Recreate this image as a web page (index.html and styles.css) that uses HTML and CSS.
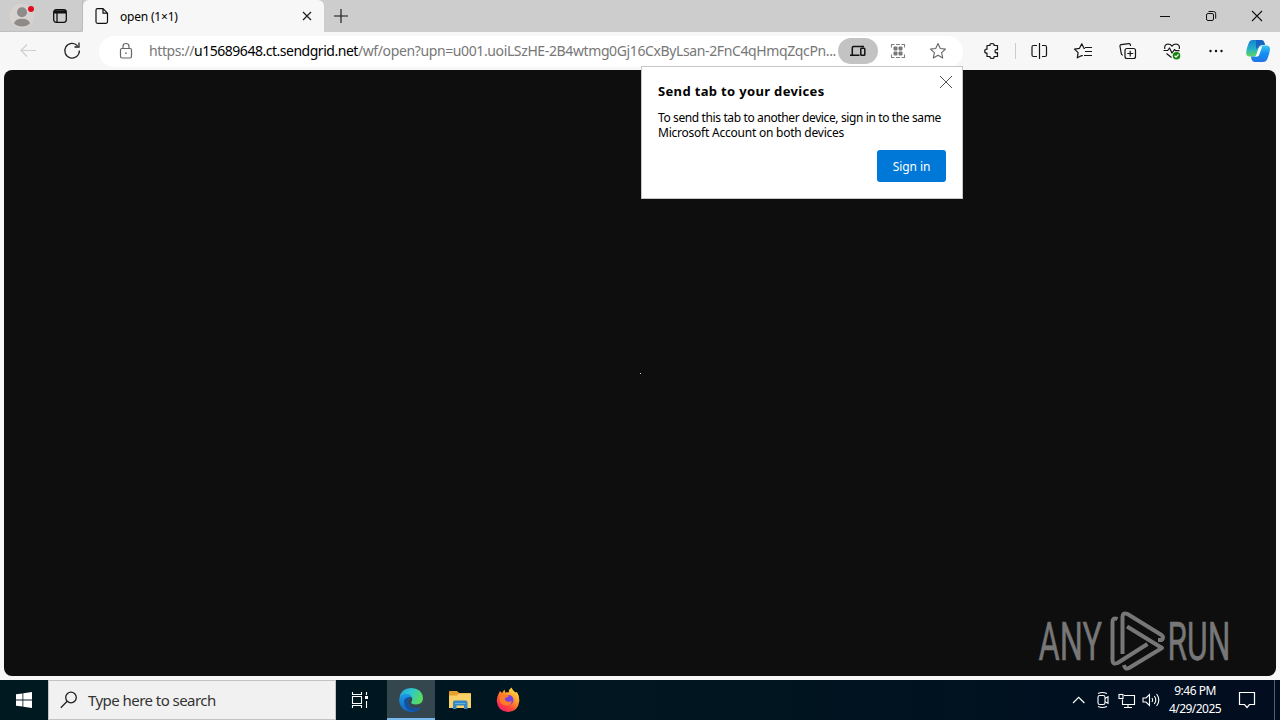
FILE: index.html
```html
<!DOCTYPE html>
<html lang="en">
<head>
<meta charset="utf-8">
<title>open (1×1)</title>
<link rel="stylesheet" href="styles.css">
</head>
<body>
<div class="desktop">
  <header class="tabstrip">
    <div class="strip-tools">
      <svg class="profile" width="28" height="28" viewBox="0 0 28 28"><circle cx="14" cy="14" r="12.5" fill="#d5d2d0"/><circle cx="14" cy="10.3" r="5" fill="#8e8b89"/><path d="M6 21.5q1-4.700 8-4.700t8 4.700q-3 3-8 3t-8-3z" fill="#8e8b89"/><circle cx="23" cy="7" r="3" fill="#e00b1c"/></svg>
      <svg class="workspaces" width="16" height="16" viewBox="0 0 16 16" fill="none" stroke="#111" stroke-width="1.300"><rect x="1.700" y="1.700" width="12.600" height="12.600" rx="2.500"/><path d="M2 3h12M2 4.600h12" stroke-width="1.700"/><path d="M5 5v9"/></svg>
    </div>
    <div class="tab">
      <svg width="14" height="16" viewBox="0 0 14 16" fill="none" stroke="#111" stroke-width="1.200"><path d="M2.500.7h5.500l4.500 4.500v8.600q0 1.500-1.500 1.500H2.500Q1 15.300 1 13.800V2.200Q1 .7 2.500.7zM8 .7v4.500h4.500"/></svg>
      <span class="tab-title">open (1×1)</span>
      <svg width="10" height="10" viewBox="0 0 10 10" stroke="#222" stroke-width="1.300"><path d="M1 1l8 8M9 1l-8 8"/></svg>
    </div>
    <svg class="newtab" width="14" height="14" viewBox="0 0 14 14" stroke="#111" stroke-width="1.100"><path d="M7 0v14M0 7h14"/></svg>
    <div class="window-buttons">
      <svg width="46" height="32" stroke="#111"><path d="M18 16.500h10"/></svg>
      <svg width="46" height="32" fill="none" stroke="#111"><rect x="18.500" y="13.500" width="7" height="7" rx="1.500"/><path d="M20.500 11.500h5q2.200 0 2.200 2.200v5"/></svg>
      <svg width="46" height="32" stroke="#111" stroke-width="1.100"><path d="M18 11l10 10M28 11L18 21"/></svg>
    </div>
  </header>

  <nav class="toolbar">
    <svg class="btn" viewBox="0 0 40 38" fill="none" stroke="#cfcfcf" stroke-width="1.200"><path d="M28 18.500H13M19 12.500l-6 6 6 6"/></svg>
    <svg class="btn refresh" viewBox="0 0 40 38" fill="none" stroke="#222" stroke-width="1.300"><path d="M25.500 13.800A7.300 7.300 0 1 0 27.400 18.500M27 10.500v4.500h-4.500"/></svg>
    <div class="omnibox">
      <svg class="lock" width="16" height="18" viewBox="0 0 16 18" fill="none" stroke="#666" stroke-width="1.200"><rect x="2.500" y="6.500" width="11" height="9.500" rx="1.500"/><path d="M5 6.500V4.500Q5 1.500 8 1.500t3 3v2"/><circle cx="8" cy="11.200" r=".7" fill="#666" stroke="none"/><path d="M7.500 11.200h1"/></svg>
      <div class="url"><span class="u1">https://</span><span class="host">u15689648.ct.sendgrid.net</span><span class="path">/wf/open?upn=u001.uoiLSzHE-2B4wtmg0Gj16CxByLsan-2FnC4qHmqZqcPn...</span></div>
      <svg class="pill" width="40" height="26" viewBox="0 0 40 26" fill="none" stroke="#111" stroke-width="1.500"><path d="M26 8.500H15.500Q14.300 8.500 14.300 9.700V17M12 17.200h9.500"/><rect x="22.800" y="10.300" width="4" height="7" rx=".8"/></svg>
      <svg class="btn" viewBox="0 0 40 38" fill="none" stroke="#808080" stroke-width="1.100"><path d="M13.500 15.500v-3h3M23.500 12.500h3v3M26.500 22.500v3h-3M16.500 25.500h-3v-3M18 12.500h4M18 25.500h4"/><g fill="#777" stroke="none"><rect x="15.500" y="14.500" width="4" height="4" rx="1"/><rect x="20.500" y="14.500" width="4" height="4" rx="1"/><rect x="15.500" y="19.500" width="4" height="4" rx="1"/><rect x="20.500" y="19.500" width="4" height="4" rx="1"/></g></svg>
      <svg class="btn" viewBox="0 0 40 38" fill="none" stroke="#666" stroke-width="1.100" stroke-linejoin="round"><path d="M20 11.500l2.300 5 5.200.6-3.900 3.600 1.100 5.300-4.700-2.700-4.700 2.700 1.100-5.300-3.900-3.600 5.200-.6z"/></svg>
    </div>
    <svg class="btn ext" viewBox="0 0 40 38" fill="none" stroke="#151515" stroke-width="1.200" stroke-linejoin="round"><path d="M16 13.500h3Q18.500 11.500 21 11.500t2 2H26.500v4.200q-2.500-.6-2.500 1.500t2.500 1.500V24.500h-3.500q.5 2-1.800 2t-2.200-2h-3v-3.300q-2.300 0-2.300-2t2.300-2z"/></svg>
    <div class="sep"></div>
    <svg class="btn" viewBox="0 0 40 38" fill="none" stroke="#151515" stroke-width="1.200"><path d="M18 13.500h-3.500q-1.500 0-1.500 1.500v8q0 1.500 1.500 1.500H18M23 13.500h3q1.500 0 1.500 1.500v8q0 1.500-1.500 1.500h-3M20.500 11v16"/></svg>
    <svg class="btn fav" viewBox="0 0 40 38" fill="none" stroke="#151515" stroke-width="1.200" stroke-linejoin="round"><path d="M21 16.500l-1-.2-2.200-4.500-2.300 4.500-5 .8 3.600 3.500-.8 5.200 4.500-2.300 1 .4M21 15.500h7M21 19.500h7M20 23.500h8"/></svg>
    <svg class="btn" viewBox="0 0 40 38" fill="none" stroke="#151515" stroke-width="1.200"><path d="M22.500 14v-1q-.3-1.500-1.800-1.300l-7.500 1q-1.500.2-1.200 1.800l1.300 7.200q.2 1.300 1.500 1.500"/><rect x="17" y="16.500" width="10.500" height="10" rx="2"/><path d="M22.200 18.700v5.800M19.300 21.500h5.900"/></svg>
    <svg class="btn" viewBox="0 0 40 38" fill="none" stroke="#151515" stroke-width="1.200" stroke-linejoin="round"><path d="M12.800 17q-.8-4.500 3.200-5 2.500 0 4 2.200 1.500-2.200 4-2.200 4.200.5 3.300 5M11.500 18.500h4.200l1.800-2.500 2.500 5 2.500-3.500 1 1.200h4M14.500 21.500l5 4"/><circle cx="24.500" cy="23.700" r="3.800" fill="#13850e" stroke="none"/><path d="M22.600 23.800l1.400 1.300 2.500-2.600" stroke="#fff"/></svg>
    <svg class="btn" viewBox="0 0 40 38" fill="#111"><circle cx="14.500" cy="19" r="1.200"/><circle cx="20" cy="19" r="1.200"/><circle cx="25.500" cy="19" r="1.200"/></svg>
    <svg class="btn copilot" viewBox="0 0 40 38">
      <defs><linearGradient id="ca" x1="0" y1="0" x2="0" y2="1"><stop offset="0" stop-color="#1682d4"/><stop offset=".55" stop-color="#25b2c8"/><stop offset="1" stop-color="#62d45e"/></linearGradient><linearGradient id="cb" x1="0" y1="0" x2="0" y2="1"><stop offset="0" stop-color="#38c7f4"/><stop offset=".5" stop-color="#128df0"/><stop offset="1" stop-color="#2475e8"/></linearGradient></defs>
      <path d="M14.500 8h9q2.200.2 2.800 2.500l.8 2.500h-3q-2.200 0-3 2.200l-2.500 7.500q-.8 1.700-2.500 1.700H11q-3.300-.5-2.800-4.400.6-4.300 2.500-9Q11.700 8 14.500 8z" fill="url(#ca)"/>
      <path d="M25.500 13.500h3.500q3.500.6 2.900 4.400-.6 4.300-2.400 8.600-1.200 3.500-4.500 3.500h-8.500q-2.200-.2-2.900-2.600l-.7-3h3.300q2.100 0 2.800-2.100l2.500-7q.8-1.800 4-1.800z" fill="url(#cb)"/><path d="M18 8h5.500q2.200.2 2.800 2.500l.8 2.500h-3q-2.200 0-3 2.200L18 17z" fill="#174fb5" opacity=".65"/><path d="M21.200 14.500h3l-3 8.500q-.7 1.800-2.700 1.800h-2l1.500-1.200z" fill="#fff"/>
    </svg>
  </nav>

  <main class="page"><div class="pixel"></div>
    <svg class="watermark" width="210" height="70" viewBox="0 0 210 70">
      <g fill="#777" stroke="#777" stroke-width=".5" font-family="Roboto, sans-serif" font-size="53"><text x="3.500" y="54" textLength="63.500" lengthAdjust="spacingAndGlyphs">ANY</text><text x="132.500" y="54" textLength="63" lengthAdjust="spacingAndGlyphs">RUN</text></g>
      <g fill="none" stroke="#777" stroke-width="4" stroke-linejoin="round"><path d="M82.500 13q-5-2-5 3v38q0 5 5 3l30-19"/><path d="M87.500 48V11q0-5 5-3l34 21q3 3 0 5h-3.500"/><path d="M92 20.500l35 21.500-33 20q-4 2-5-3"/></g>
    </svg>
  </main>

  <footer class="taskbar">
    <div class="start"><svg width="16" height="16" viewBox="0 0 16 16" fill="#fff"><path d="M0 2.300l6.500-.9v6.100H0zM7.300 1.200L16 0v7.500H7.300zM0 8.400h6.500v6.200L0 13.700zM7.300 8.400H16V16l-8.700-1.200z"/></svg></div>
    <div class="search"><svg width="18" height="18" viewBox="0 0 18 18" fill="none" stroke="#222" stroke-width="1.300"><circle cx="11" cy="6.500" r="5.300"/><path d="M7.200 10.300L.8 16.700"/></svg><span>Type here to search</span></div>
    <svg class="task" viewBox="0 0 48 40" fill="none" stroke="#fff" stroke-width="1.100"><path d="M16.500 12v2.500h9V12M16.500 28v-2.500h9V28M16.500 16.500h9v7h-9zM30.500 12v3M30.500 21v7"/><path d="M29 16h3v3h-3z" fill="#fff" stroke="none"/></svg>
    <svg class="task active" viewBox="0 0 48 40">
      <defs><linearGradient id="ea" x1="0" y1="0" x2="1" y2=".4"><stop offset="0" stop-color="#279fd8"/><stop offset=".5" stop-color="#2bc8d0"/><stop offset="1" stop-color="#58da62"/></linearGradient><linearGradient id="eb" x1="0" y1="0" x2="0" y2="1"><stop offset="0" stop-color="#1a9be5"/><stop offset="1" stop-color="#1264bd"/></linearGradient></defs>
      <path d="M12.500 18Q14 8 24 8q11 0 12 10 0 6-7 6.500-6 0-4.500-3 2-3-1-5.500-5-3-11 2z" fill="url(#ea)"/><path d="M12 20q1-6 7-6.300 5 .3 5.500 3.300-4 1-3.500 6 2 6 8 5.500 3-.3 5-1.500Q30 32.500 24 32 13 31 12 20z" fill="url(#eb)"/><path d="M17 22q0-5 7-5-4 2-3 6 2 6 8 5.500 3-.3 5-1.500-2.500 4-7 4.700-9-1-10-9.700z" fill="#1450a0"/>
      <rect y="38" width="48" height="2" fill="#76b9ed"/>
    </svg>
    <svg class="task" viewBox="0 0 48 40"><path d="M14 12q0-1 1-1h7l2 2h11q1 0 1 1v14H14z" fill="#e5a12d"/><path d="M14 15.500h8l2-2h12V28H14z" fill="#f8d268"/><path d="M18 29v-6.500q0-2 2-2h10.500q2 0 2 2V29h-3.500v-3.500h-7.500V29z" fill="#3588c5"/><path d="M20 23.500h10.500" stroke="#63b0dd"/></svg>
    <svg class="task firefox" viewBox="0 0 48 40">
      <defs><linearGradient id="fa" x1=".9" y1="0" x2=".2" y2="1"><stop offset="0" stop-color="#fff14f"/><stop offset=".4" stop-color="#ff9928"/><stop offset=".7" stop-color="#ff4939"/><stop offset="1" stop-color="#ef176d"/></linearGradient></defs>
      <path d="M14.500 14l1.500-3 2 2 2.500-3.500.8 3q1.700-.4 3.200 0Q25 9 27.500 7.500q1 3 4 5l1.500-.5q2.500 4 2.300 9Q34 32 24 32q-10-.5-11.200-10.500-.3-4 1.700-7.500z" fill="url(#fa)"/><circle cx="24.500" cy="20" r="5" fill="#7542e5"/><path d="M16 14q3-1.500 6 1l3 .5q-1 2.300-4 2.500-1 2 2 3.500 3 1 5-1-1 5-6 5-6-1-6.500-6z" fill="#ff7c27"/>
    </svg>
    <div class="tray">
      <svg width="24" height="40" fill="none" stroke="#fff" stroke-width="1.200"><path d="M6 23l5.700-5.700 5.700 5.700"/></svg>
      <svg width="24" height="40" fill="none" stroke="#fff" stroke-width="1.100"><rect x="7" y="15.500" width="7" height="9" rx="1.800"/><path d="M14 18.500l3-1.700v6.600l-3-1.700M7 13.500q4-2 9 0M7 26.500q4 2 9 0"/></svg>
      <svg width="24" height="40" fill="none" stroke="#fff" stroke-width="1.100"><path d="M9 15.500h10.500v9H7.500v-5M13 24.500v3M9 27.500h8"/><rect x="4" y="14.500" width="4" height="4"/></svg>
      <svg width="24" height="40" fill="none" stroke="#fff" stroke-width="1.100"><path d="M4 18h3l3.500-3.500v11L7 22H4zM13 18q1.500 2 0 4M15.300 16q3 4 0 8M17.600 14q4.500 6 0 12"/></svg>
      <div class="clock"><span>9:46 PM</span><span class="date">4/29/2025</span></div>
      <svg width="24" height="40" fill="none" stroke="#fff" stroke-width="1.200"><path d="M4.500 12.500h15v12h-5l-2.500 3-2.500-3h-5z"/></svg>
    </div>
    <div class="peek"></div>
  </footer>
</div>

<section class="popup">
  <svg class="close" width="12" height="12" viewBox="0 0 12 12" stroke="#555"><path d="M0 0l12 12M12 0L0 12"/></svg>
  <h1>Send tab to your devices</h1>
  <p><span class="line1">To send this tab to another device, sign in to the same</span><br><span class="line2">Microsoft Account on both devices</span></p>
  <button>Sign in</button>
</section>
</body>
</html>
```
FILE: styles.css
```css
* { box-sizing: border-box; }
body { margin: 0; width: 1280px; height: 720px; overflow: hidden; font-family: "Noto Sans", "Open Sans", sans-serif; color: #000; }
svg { display: block; flex: none; }
.desktop { height: 720px; display: flex; flex-direction: column; background: #f7f7f7; }
.tabstrip { height: 32px; display: flex; background: #cdcdcd; align-items: center; }
.strip-tools { width: 83px; height: 32px; display: flex; align-items: center; padding-left: 8px; gap: 16px; border-radius: 0 0 4px 0; border-right: 1px solid #bbb; border-bottom: 1px solid #c0c0c0; }
.tab { width: 241px; height: 32px; display: flex; align-items: center; padding: 0 12px; background: #f7f7f7; border-radius: 6px 6px 0 0; font-size: 12px; }
.tab-title { flex: 1; margin-left: 11px; letter-spacing: -0.2px; white-space: nowrap; }
.newtab { margin-left: 10px; }
.window-buttons { display: flex; margin-left: auto; }
.toolbar { height: 38px; display: flex; align-items: center; padding-left: 8px; background: #f7f7f7; }
.btn { width: 40px; height: 38px; }
.refresh { margin-left: 4px; }
.omnibox { width: 864px; height: 31px; margin-left: 7px; display: flex; align-items: center; background: #fff; border-radius: 16px; padding-left: 19px; }
.lock { margin-right: 15px; }
.url { width: 690px; font-size: 14px; line-height: 20px; white-space: nowrap; color: #777; }
.u1 { letter-spacing: -0.4px; }
.host { color: #000; letter-spacing: -0.48px; }
.path { letter-spacing: -0.38px; }
.pill { margin-left: -1px; background: #c3c3c3; border-radius: 13px; }
.ext { margin-left: 8px; }
.sep { width: 8px; height: 16px; border-left: 1px solid #ccc; margin-left: 4px; margin-right: -4px; }
.fav { margin-left: 5px; }
.fav ~ .btn { margin-left: 4px; }
.fav ~ .copilot { margin-left: 2px; }
.page { height: 606px; margin: 0 4px; border-radius: 8px; background: #0e0e0e; display: grid; place-items: center; grid-template: 606px / 1272px; }
.pixel { width: 1px; height: 1px; background: #ddd; grid-area: 1 / 1; }
.watermark { grid-area: 1 / 1; place-self: end; margin: 0 31px 0 0; }
.taskbar { height: 40px; margin-top: 4px; display: flex; background: linear-gradient(90deg, #001820, #001520 60%, #020d20); }
.start { width: 48px; display: flex; align-items: center; justify-content: center; }
.search { width: 288px; border: 1px solid #c2c2c2; background: #f1f1f1; display: flex; align-items: center; padding-left: 11px; color: #333; font-size: 15px; }
.search span { margin-left: 10px; letter-spacing: -0.55px; }
.task { width: 48px; height: 40px; }
.active { background: #34464e; margin-left: 3px; }
.firefox { margin-left: 1px; }
.tray { display: flex; margin-left: auto; color: #fff; }
.clock { width: 72px; height: 40px; padding: 2px 8px 0 0; display: flex; flex-direction: column; align-items: center; font-size: 12px; line-height: 18px; }
.clock span { letter-spacing: -0.5px; }
.clock .date { letter-spacing: -0.55px; }
.peek { width: 21px; border-right: 5px solid transparent; box-shadow: inset -1px 0 #536074; }
.popup { position: absolute; left: 641px; top: 66px; width: 322px; height: 133px; background: #fff; border: 1px solid #c6c6c6; padding: 15px 16px; display: flex; flex-direction: column; }
.close { position: absolute; right: 10px; top: 9px; }
.popup h1 { margin: 0; font-size: 13px; line-height: 18px; font-weight: 700; white-space: nowrap; letter-spacing: 0.34px; }
.popup p { margin: 10px 0 0; font-size: 12px; line-height: 15px; white-space: nowrap; }
.line1 { letter-spacing: -0.38px; }
.line2 { letter-spacing: -0.23px; }
.popup button { align-self: flex-end; margin-top: 10px; width: 69px; height: 32px; border: 0; border-radius: 3px; background: #0078d7; color: #fff; font-family: inherit; font-size: 12px; letter-spacing: -0.1px; padding: 0; }
```
